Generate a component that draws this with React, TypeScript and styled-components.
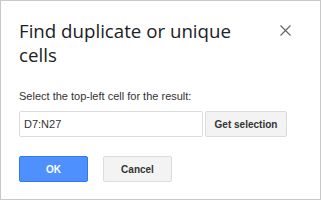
import styled, { createGlobalStyle } from 'styled-components';

const GlobalStyle = createGlobalStyle`
  html, body {
    margin: 0;
    padding: 0;
    background: #ffffff;
  }
  * {
    box-sizing: border-box;
  }
`;

const Dialog = styled.div`
  width: 321px;
  height: 200px;
  border: 1px solid #c8c8c8;
  background: #ffffff;
  padding: 18px 18px 0 18px;
  font-family: 'Liberation Sans', Arial, sans-serif;
  color: #333333;
`;

const Header = styled.div`
  display: flex;
  align-items: flex-start;
`;

const Title = styled.h1`
  flex: 1;
  margin: 0;
  padding-right: 20px;
  font-family: 'Open Sans', Roboto, sans-serif;
  font-weight: 400;
  font-size: 18.7px;
  line-height: 24px;
  color: #202124;
`;

const CloseButton = styled.button`
  width: 20px;
  height: 20px;
  margin: 1px 7px 0 0;
  padding: 0;
  border: none;
  background: transparent;
  display: flex;
  align-items: center;
  justify-content: center;
  color: #5f6368;
  cursor: pointer;
`;

const Label = styled.div`
  margin-top: 23px;
  font-size: 11px;
  line-height: 13px;
  color: #333333;
`;

const InputRow = styled.div`
  display: flex;
  gap: 2px;
  margin-top: 8px;
`;

const RangeInput = styled.input`
  width: 184px;
  height: 26px;
  border: 1px solid #dcdcdc;
  border-radius: 2px;
  padding: 0 4px;
  font-family: 'Liberation Sans', Arial, sans-serif;
  font-size: 11px;
  color: #333333;
  outline: none;
`;

const Button = styled.button<{ primary?: boolean; wide?: boolean }>`
  height: 26px;
  width: ${(p) => (p.wide ? '82px' : '69px')};
  border-radius: 2px;
  border: 1px solid ${(p) => (p.primary ? '#3079ed' : '#dcdcdc')};
  background: ${(p) => (p.primary ? '#4d90fe' : '#f3f3f3')};
  color: ${(p) => (p.primary ? '#ffffff' : '#333333')};
  font-family: 'Liberation Sans', Arial, sans-serif;
  font-weight: 700;
  font-size: 10px;
  padding: 0;
  cursor: pointer;
`;

const Actions = styled.div`
  display: flex;
  gap: 15px;
  margin-top: 19px;
`;

export default function App() {
  return (
    <>
      <GlobalStyle />
      <Dialog>
        <Header>
          <Title>Find duplicate or unique cells</Title>
          <CloseButton aria-label="Close">
            <svg width="11" height="11" viewBox="0 0 11 11">
              <path d="M0.5 0.5 L10.5 10.5 M10.5 0.5 L0.5 10.5" stroke="currentColor" strokeWidth="1.1" />
            </svg>
          </CloseButton>
        </Header>
        <Label>Select the top-left cell for the result:</Label>
        <InputRow>
          <RangeInput defaultValue="D7:N27" />
          <Button wide>Get selection</Button>
        </InputRow>
        <Actions>
          <Button primary>OK</Button>
          <Button>Cancel</Button>
        </Actions>
      </Dialog>
    </>
  );
}
